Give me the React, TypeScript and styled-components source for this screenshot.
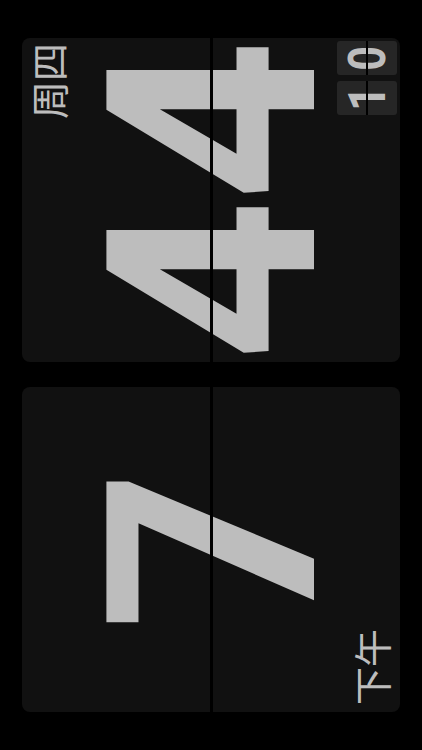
import * as React from 'react';
import styled, { createGlobalStyle } from 'styled-components';

const GlobalStyle = createGlobalStyle`
  html, body {
    margin: 0;
    padding: 0;
    background: #000;
  }
  body {
    overflow: hidden;
  }
`;

// portrait phone screen
const Screen = styled.div`
  width: 422px;
  height: 750px;
  overflow: hidden;
  background: #000;
`;

// the clock is laid out in landscape and turned a quarter to the left
const Stage = styled.div`
  box-sizing: border-box;
  display: flex;
  gap: 25px;
  height: 422px;
  padding: 22px 38px;
  transform: translateY(750px) rotate(-90deg);
  transform-origin: top left;
  width: 750px;
`;

const Card = styled.div`
  background: #111111;
  border-radius: 8px;
  display: grid;
  flex: 1 1 0;
  grid-template: 1fr / 1fr;
  min-width: 0;
  position: relative;

  &::after {
    background: #000;
    content: '';
    height: 3px;
    left: 0;
    position: absolute;
    right: 0;
    top: calc(50% - 1.5px);
  }

  & > * {
    grid-area: 1 / 1;
  }
`;

const Digits = styled.div`
  align-self: center;
  color: #bdbdbd;
  display: flex;
  font-family: Roboto, 'Liberation Sans', sans-serif;
  font-size: 292px;
  font-weight: 700;
  justify-self: center;
  line-height: 1.1;
  margin-top: 8px;
`;

const Digit = styled.span`
  display: block;
  margin: 0 -4px;
  transform: scaleX(0.96);
`;

const Label = styled.div<{ $corner: 'topRight' | 'bottomLeft' }>`
  align-self: ${p => (p.$corner === 'topRight' ? 'start' : 'end')};
  color: #bdbdbd;
  font-family: 'Noto Sans CJK SC', 'Noto Sans', sans-serif;
  font-size: 38px;
  font-weight: 400;
  justify-self: ${p => (p.$corner === 'topRight' ? 'end' : 'start')};
  line-height: 1.2;
  margin: ${p => (p.$corner === 'topRight' ? '3px 5px 0 0' : '0 0 6px 7px')};
  z-index: 2;
`;

const Seconds = styled.div`
  align-self: end;
  display: flex;
  gap: 6px;
  justify-self: end;
  margin: 0 3px 3px 0;
  z-index: 2;
`;

const Tile = styled.div`
  align-items: center;
  background: #262626;
  border-radius: 3px;
  color: #bdbdbd;
  display: flex;
  font-family: Roboto, 'Liberation Sans', sans-serif;
  font-size: 51px;
  font-weight: 700;
  height: 60px;
  justify-content: center;
  line-height: 1;
  position: relative;
  width: 34px;

  span {
    display: inline-block;
    transform: scaleX(0.85);
  }

  &::after {
    background: #000;
    content: '';
    height: 2px;
    left: 0;
    position: absolute;
    right: 0;
    top: 29px;
  }
`;

const App = () => {
  const hour = '7';
  const minute = '44';
  const second = '10';

  return (
    <Screen>
      <GlobalStyle />
      <Stage>
        <Card>
          <Digits>
            {hour.split('').map((d, i) => (
              <Digit key={i}>{d}</Digit>
            ))}
          </Digits>
          <Label $corner="bottomLeft">下午</Label>
        </Card>
        <Card>
          <Digits>
            {minute.split('').map((d, i) => (
              <Digit key={i}>{d}</Digit>
            ))}
          </Digits>
          <Label $corner="topRight">周四</Label>
          <Seconds>
            {second.split('').map((d, i) => (
              <Tile key={i}>
                <span>{d}</span>
              </Tile>
            ))}
          </Seconds>
        </Card>
      </Stage>
    </Screen>
  );
};

export default App;
